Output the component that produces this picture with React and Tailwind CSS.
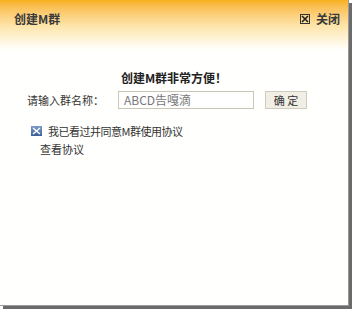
export default function App() {
  const font = { fontFamily: '"Noto Sans CJK SC","DejaVu Sans",sans-serif' };
  return (
    <div className="w-[354px] h-[312px] bg-white relative" style={font}>
      <div className="w-[349px] h-[306px] bg-[#fffffd] shadow-[3px_3px_0_#6b6b6b] border-r border-b border-[#9a9a9a] flex flex-col">
        <div className="h-[50px] bg-gradient-to-b from-[#f8b11a] via-[#fde3a6] to-[#fffffd] flex items-start justify-between pl-[14px] pr-[8px] pt-[10px]">
          <span className="text-[12px] font-bold text-[#3a3a3a]">创建M群</span>
          <span className="flex items-center gap-[6px] text-[12px] font-bold text-[#3a3a3a]">
            <span className="w-[10px] h-[10px] border border-[#333] flex items-center justify-center">
              <svg width="8" height="8" viewBox="0 0 8 8"><path d="M1 1L7 7M7 1L1 7" stroke="#222" strokeWidth="1.6" /></svg>
            </span>
            关闭
          </span>
        </div>
        <div className="flex flex-col">
          <div className="text-center text-[12px] leading-[18px] font-bold text-[#222] mt-[19px]">创建M群非常方便！</div>
          <div className="flex items-center mt-[4px] pl-[27px]">
            <span className="text-[11px] text-[#333] w-[91px]">请输入群名称：</span>
            <div className="w-[136px] h-[18px] border border-[#c9c6b8] bg-white flex items-center pl-[5px] text-[12px] text-[#777]">ABCD告嘎滴</div>
            <button className="ml-[11px] w-[42px] h-[18px] border border-[#cfcbbd] bg-[#f1eee5] text-[11px] text-[#333]">确 定</button>
          </div>
          <div className="flex items-center mt-[13px] pl-[31px] h-[18px]">
            <span className="w-[11px] h-[10px] bg-gradient-to-b from-[#7f9dcb] to-[#3b5f9a] flex items-center justify-center">
              <svg width="9" height="8" viewBox="0 0 9 8"><path d="M1 1L8 7M8 1L1 7" stroke="#fff" strokeWidth="1.5" /></svg>
            </span>
            <span className="ml-[6px] text-[11px] tracking-[-0.5px] text-[#333]">我已看过并同意M群使用协议</span>
          </div>
          <div className="pl-[40px] mt-[1px] text-[11px] leading-[16px] text-[#333]">查看协议</div>
        </div>
      </div>
    </div>
  );
}
